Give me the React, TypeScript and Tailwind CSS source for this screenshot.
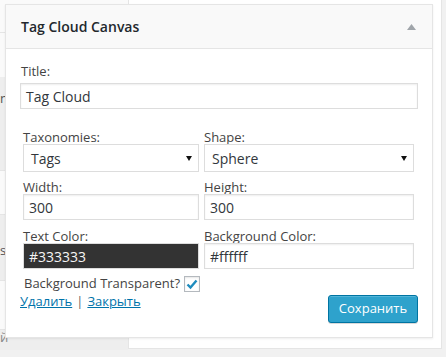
const font = { fontFamily: '"Open Sans", "Liberation Sans", sans-serif' };

function Field({ label, value, dark }: { label: string; value: string; dark?: boolean }) {
  return (
    <div className="flex flex-col">
      <label className="text-[13px] leading-[14px] text-[#444]">{label}</label>
      <div
        className={`h-[26px] border px-[5px] flex items-center text-[14px] ${
          dark
            ? "bg-[#333333] border-[#dddddd] text-[#f5f5f5]"
            : "bg-white border-[#dddddd] text-[#32373c] shadow-[inset_0_1px_2px_rgba(0,0,0,0.07)]"
        }`}
      >
        {value}
      </div>
    </div>
  );
}

function SelectBox({ label, value }: { label: string; value: string }) {
  return (
    <div className="flex flex-col">
      <label className="text-[13px] leading-[14px] text-[#444]">{label}</label>
      <div className="h-[28px] border border-[#dddddd] bg-white pl-[7px] pr-[6px] flex items-center justify-between text-[14px] text-[#32373c]">
        <span>{value}</span>
        <svg width="6" height="5" viewBox="0 0 6 5">
          <path d="M0 0h6L3 5z" fill="#111" />
        </svg>
      </div>
    </div>
  );
}

export default function App() {
  return (
    <div className="relative w-[446px] h-[357px] bg-[#f1f1f1] overflow-hidden" style={font}>
      {/* --- background: widget list + sidebar area --- */}
      <div className="flex">
        <div className="w-[128px] flex flex-col text-[13px] text-[#555]">
          <div className="h-[33px] bg-[#fafafa] border-b border-[#e5e5e5]" />
          <div className="h-[44px] bg-[#fafafa]" />
          <div className="h-[93px] bg-[#eeeeee] pt-[12px]">
            <span>n</span>
          </div>
          <div className="h-[45px] bg-[#fafafa] border-y border-[#e5e5e5]" />
          <div className="h-[65px] bg-[#eeeeee] pt-[26px]">
            <span>s</span>
          </div>
          <div className="h-[50px] bg-[#fafafa] border-y border-[#e5e5e5]" />
          <div className="h-[20px] bg-[#eeeeee] leading-[14px]">
            <span className="text-[#888]">й</span>
          </div>
        </div>
        <div className="w-[314px] h-[349px] bg-white border-x border-b border-[#e5e5e5]" />
      </div>

      {/* --- dragged widget --- */}
      <div className="absolute left-[5px] top-[4px] w-[428px] bg-white border border-[#e5e5e5] shadow-[0_1px_2px_rgba(0,0,0,0.07)]">
        <div className="h-[44px] bg-[#f9f9f9] border-b border-[#e5e5e5] pl-[15px] pr-[16px] flex items-center justify-between">
          <span className="text-[14px] font-semibold text-[#23282d]">Tag Cloud Canvas</span>
          <svg width="9" height="6" viewBox="0 0 9 6">
            <path d="M4.5 0L9 6H0z" fill="#a0a5aa" />
          </svg>
        </div>

        <div className="pt-[13px] px-[14px] pb-[14px]">
          <label className="block text-[13px] leading-[18px] text-[#444] pl-[1px]">Title:</label>
          <div className="mt-[3px] h-[26px] border border-[#dddddd] bg-white px-[5px] flex items-center text-[14px] text-[#32373c] shadow-[inset_0_1px_2px_rgba(0,0,0,0.07)]">
            Tag Cloud
          </div>

          <div className="mt-[21px] ml-[3px] w-[391px] flex flex-col">
            <div className="grid grid-cols-[176px_210px] gap-x-[5px]">
              <SelectBox label="Taxonomies:" value="Tags" />
              <SelectBox label="Shape:" value="Sphere" />
            </div>
            <div className="mt-[8px] grid grid-cols-[176px_210px] gap-x-[5px]">
              <Field label="Width:" value="300" />
              <Field label="Height:" value="300" />
            </div>
            <div className="mt-[9px] grid grid-cols-[176px_210px] gap-x-[5px]">
              <Field label="Text Color:" value="#333333" dark />
              <Field label="Background Color:" value="#ffffff" />
            </div>
            <div className="mt-[7px] h-[16px] flex items-center text-[13px] text-[#444]">
              <span className="pl-[1px]">Background Transparent?</span>
              <span className="ml-[4px] w-[16px] h-[16px] border border-[#b4b9be] bg-white shadow-[inset_0_1px_2px_rgba(0,0,0,0.1)] flex items-center justify-center">
                <svg width="12" height="11" viewBox="0 0 12 11">
                  <path d="M1.5 5.5l3 3L10.5 1.5" stroke="#1e8cbe" strokeWidth="2.4" fill="none" />
                </svg>
              </span>
            </div>
          </div>

          <div className="flex items-start justify-between">
            <div className="text-[13px] leading-[18px]">
              <a className="text-[#0073aa] underline">Удалить</a>
              <span className="text-[#666] mx-[4px]">|</span>
              <a className="text-[#0073aa] underline">Закрыть</a>
            </div>
            <button className="mt-[3px] h-[28px] w-[90px] rounded-[3px] bg-[#2ea2cc] border border-[#0074a2] text-white text-[13px] shadow-[inset_0_1px_0_rgba(120,200,230,0.5),0_1px_0_rgba(0,0,0,0.15)]">
              Сохранить
            </button>
          </div>
        </div>
      </div>
    </div>
  );
}
